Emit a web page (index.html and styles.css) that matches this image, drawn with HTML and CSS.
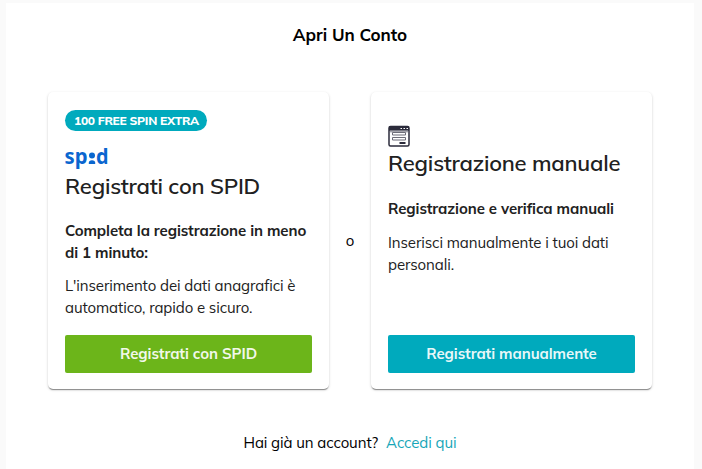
FILE: index.html
```
<!DOCTYPE html>
<html lang="it">
<head>
    <meta charset="UTF-8">
    <meta name="viewport" content="width=device-width, initial-scale=1.0">
    <title>Apri Un Conto</title>
    <link rel="stylesheet" href="styles.css">
</head>
<body>
    <main class="panel">
        <h1 class="title">Apri Un Conto</h1>

        <div class="options">
            <section class="card">
                <span class="badge">100 FREE SPIN EXTRA</span>
                <svg class="spid-logo" width="44" height="22" viewBox="0 0 44 22" role="img" aria-label="spid">
                    <g class="spid-text">
                        <text x="-0.5" y="17" textLength="23" lengthAdjust="spacingAndGlyphs">sp</text>
                        <text x="31" y="17" textLength="12.5" lengthAdjust="spacingAndGlyphs">d</text>
                    </g>
                    <circle cx="27" cy="8.6" r="3"/>
                    <path d="M23.8 17v-1.2q0-2.6 3.2-2.6t3.2 2.6V17z"/>
                </svg>
                <h2 class="card-title">Registrati con SPID</h2>
                <p class="lead">Completa la registrazione in meno<br>di 1 minuto:</p>
                <p class="text">L'inserimento dei dati anagrafici è<br>automatico, rapido e sicuro.</p>
                <button class="button green" type="button">Registrati con SPID</button>
            </section>

            <span class="or">o</span>

            <section class="card manual">
                <svg class="form-icon" width="22" height="22" viewBox="0 0 22 22" aria-hidden="true">
                    <rect x="1" y="1.5" width="20" height="19.5" rx="1.5" fill="#fff" stroke="#2b2b3b" stroke-width="1.5"/>
                    <path d="M1 1.5h20v4.2H1z" fill="#2b2b3b"/>
                    <path d="M12.5 3.5h1.5m1.5 0H17m1.5 0H20" stroke="#fff" stroke-width="1.2"/>
                    <path d="M2 5.7h18v1.7H2z" fill="#a5a5ad"/>
                    <path d="M4.5 7.5h13v2.5h-13zM4.5 12.5h13v2.5h-13z" fill="#fff" stroke="#6d6d78"/>
                    <path d="M11.5 18h6" stroke="#2b2b3b" stroke-width="2"/>
                </svg>
                <h2 class="card-title">Registrazione manuale</h2>
                <p class="lead">Registrazione e verifica manuali</p>
                <p class="text">Inserisci manualmente i tuoi dati<br>personali.</p>
                <button class="button teal" type="button">Registrati manualmente</button>
            </section>
        </div>

        <p class="login">Hai già un account? <a href="#">Accedi qui</a></p>
    </main>
</body>
</html>
```

FILE: styles.css
```
* {
    box-sizing: border-box;
}

body {
    margin: 0;
    padding: 3px 8px 0 6px;
    height: 469px;
    overflow: hidden;
    background-color: #fafafa;
    color: #212121;
    font-family: Muli, Mulish, Lato, sans-serif;
    font-size: 15px;
    line-height: 22px;
    letter-spacing: -0.09px;
}

h1, h2, p {
    margin: 0;
}

.panel {
    height: 466px;
    padding: 20px 42px 0;
    background-color: #fff;
}

.title {
    color: #000;
    font-size: 17px;
    font-weight: 700;
    line-height: 24px;
    text-align: center;
    letter-spacing: 0;
}

.options {
    display: flex;
    align-items: center;
    justify-content: space-between;
    margin-top: 45px;
}

.card {
    display: flex;
    flex-direction: column;
    align-items: flex-start;
    width: 281px;
    height: 297px;
    padding: 18px 17px 16px;
    border-radius: 5px;
    background-color: #fff;
    box-shadow: 0 2px 1px -1px rgba(0, 0, 0, 0.3), 0 1px 1px rgba(0, 0, 0, 0.14), 0 1px 3px rgba(0, 0, 0, 0.16);
}

.badge {
    height: 21px;
    padding: 0 8px 0 9px;
    border-radius: 11px;
    background-color: #00aabd;
    color: #fff;
    font-size: 12px;
    font-weight: 800;
    line-height: 22px;
    white-space: nowrap;
    letter-spacing: -0.3px;
}

.spid-logo {
    margin-top: 16px;
    overflow: visible;
    fill: #0a66cf;
}

.spid-text {
    font-family: "Noto Sans", sans-serif;
    font-size: 21px;
    font-weight: 700;
    letter-spacing: 0;
}

.form-icon {
    margin-top: 15px;
}

.card-title {
    font-size: 22px;
    font-weight: 650;
    line-height: 34px;
    white-space: nowrap;
    letter-spacing: -0.22px;
}

.manual .card-title {
    margin-top: -1px;
    margin-bottom: 1px;
}

.lead {
    margin-top: 17px;
    font-weight: 700;
    white-space: nowrap;
}

.text {
    margin-top: 11px;
    white-space: nowrap;
}

.manual .text {
    margin-top: 12px;
}

.or {
    color: #000;
}

.button {
    width: 100%;
    height: 38px;
    margin-top: auto;
    padding: 0;
    border: none;
    border-radius: 2px;
    color: rgba(255, 255, 255, 0.92);
    font: inherit;
    font-weight: 700;
    letter-spacing: -0.08px;
    cursor: pointer;
}

.green {
    background-color: #6cb51a;
}

.teal {
    background-color: #00aabd;
}

.login {
    margin-top: 43px;
    color: #000;
    text-align: center;
}

.login a {
    margin-left: 4px;
    color: #17a6b8;
    text-decoration: none;
}
```
